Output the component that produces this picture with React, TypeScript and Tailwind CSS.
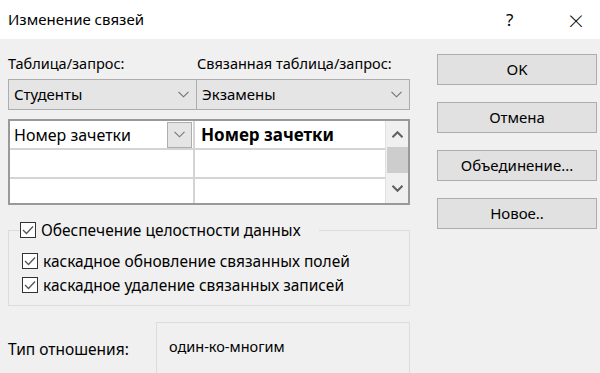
const font = { fontFamily: '"Noto Sans", "Open Sans", sans-serif' };

const Chevron = ({ className = "", bold = false }: { className?: string; bold?: boolean }) => (
  <svg width="11" height="7" viewBox="0 0 11 7" className={className}>
    <polyline
      points="0.5,0.8 5.5,5.8 10.5,0.8"
      fill="none"
      stroke="currentColor"
      strokeWidth={bold ? 2 : 1.1}
    />
  </svg>
);

const CheckBox = () => (
  <span className="flex h-4 w-4 shrink-0 items-center justify-center border border-[#333] bg-white">
    <svg width="12" height="10" viewBox="0 0 12 10">
      <polyline points="1,5 4.5,8.5 11,1.5" fill="none" stroke="#555" strokeWidth="1.3" />
    </svg>
  </span>
);

const Combo = ({ text }: { text: string }) => (
  <div className="flex h-[31px] items-center justify-between border border-[#adadad] bg-[#e5e5e5] pl-[5px] pr-[7px] text-[15px] text-black">
    <span>{text}</span>
    <Chevron className="text-[#707070]" />
  </div>
);

const Button = ({ label }: { label: string }) => (
  <button className="flex h-[31px] w-[160px] items-center justify-center border border-[#adadad] bg-[#e1e1e1] text-[15px] text-black">
    {label}
  </button>
);

export default function App() {
  return (
    <div className="h-[373px] w-[600px] overflow-hidden bg-[#f0f0f0]" style={font}>
      {/* title bar */}
      <div className="flex h-[39px] items-center bg-white pl-2 text-[15px] text-black">
        <span className="flex-1">Изменение связей</span>
        <span className="w-[20px] text-[17px]">?</span>
        <span className="ml-[42px] mr-[16px] text-[28px] font-extralight leading-none">×</span>
      </div>

      <div className="flex">
        {/* left column */}
        <div className="ml-2 w-[402px]">
          <div className="mt-[15px] grid grid-cols-[189px_213px] text-[14.5px] leading-[18px] text-black">
            <span>Таблица/запрос:</span>
            <span>Связанная таблица/запрос:</span>
          </div>
          <div className="mt-[7px] grid grid-cols-[189px_213px]">
            <Combo text="Студенты" />
            <div className="-ml-px">
              <Combo text="Экзамены" />
            </div>
          </div>

          {/* field grid */}
          <div className="mt-[9px] flex h-[86px] border-2 border-[#999] bg-white">
            <div className="grid w-[375px] grid-cols-[185px_190px] grid-rows-[29px_29px_1fr]">
              <div className="flex items-center justify-between border-r-2 border-b-2 border-[#d4d4d4] pl-[4px] text-[16px] text-black">
                <span>Номер зачетки</span>
                <span className="mr-px flex h-[26px] w-[25px] items-center justify-center border border-[#adadad] bg-[#e5e5e5]">
                  <Chevron className="text-[#777]" />
                </span>
              </div>
              <div className="flex items-center border-b-2 border-[#d4d4d4] pl-[6px] text-[17px] font-bold text-black">
                Номер зачетки
              </div>
              <div className="border-r-2 border-b-2 border-[#d4d4d4]" />
              <div className="border-b-2 border-[#d4d4d4]" />
              <div className="border-r-2 border-[#d4d4d4]" />
              <div />
            </div>
            <div className="flex flex-1 flex-col items-center border-l border-[#e0e0e0] bg-[#f0f0f0]">
              <div className="flex h-[26px] items-center">
                <Chevron bold className="rotate-180 text-[#606060]" />
              </div>
              <div className="h-[26px] w-[21px] bg-[#cdcdcd]" />
              <div className="flex flex-1 items-center">
                <Chevron bold className="text-[#606060]" />
              </div>
            </div>
          </div>

          {/* referential integrity group */}
          <fieldset className="mt-[15px] border border-[#dcdcdc] pb-[10px] pl-[13px] text-[15.5px] leading-[20px] text-black">
            <legend className="-ml-[2px] flex items-center gap-[5px] pr-[18px]">
              <CheckBox />
              <span>Обеспечение целостности данных</span>
            </legend>
            <div className="mt-[11px] flex items-center gap-[5px]">
              <CheckBox />
              <span>каскадное обновление связанных полей</span>
            </div>
            <div className="mt-[4px] flex items-center gap-[5px]">
              <CheckBox />
              <span>каскадное удаление связанных записей</span>
            </div>
          </fieldset>

          {/* relationship type */}
          <div className="mt-[16px] flex items-center">
            <span className="w-[148px] text-[15.5px] text-black">Тип отношения:</span>
            <div className="flex h-[56px] flex-1 items-center border border-[#dcdcdc] pb-[6px] pl-[12px] text-[14.5px] text-black">
              один-ко-многим
            </div>
          </div>
        </div>

        {/* buttons */}
        <div className="ml-[27px] mt-[15px] flex flex-col gap-[17px]">
          <Button label="OK" />
          <Button label="Отмена" />
          <Button label="Объединение..." />
          <Button label="Новое.." />
        </div>
      </div>
    </div>
  );
}
